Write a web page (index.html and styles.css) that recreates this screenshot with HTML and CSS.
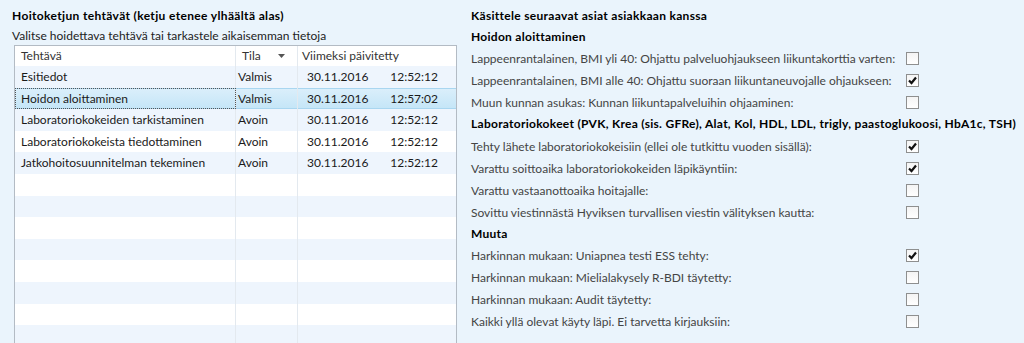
FILE: index.html
```html
<!DOCTYPE html>
<html lang="fi">
<head>
<meta charset="utf-8">
<title>Hoitoketju</title>
<link rel="stylesheet" href="styles.css">
</head>
<body>
<div class="page">
  <section class="left">
    <h2 class="title">Hoitoketjun tehtävät (ketju etenee ylhäältä alas)</h2>
    <div class="subtitle">Valitse hoidettava tehtävä tai tarkastele aikaisemman tietoja</div>
    <div class="grid">
      <div class="row head">
        <div class="c c1">Tehtävä</div>
        <div class="c c2">Tila <svg class="sort" width="7" height="4" viewBox="0 0 7 4"><path d="M0 0H7L3.5 4Z" fill="#555"/></svg></div>
        <div class="c c3">Viimeksi päivitetty</div>
      </div>
      <div class="row alt">
        <div class="c c1">Esitiedot</div>
        <div class="c c2">Valmis</div>
        <div class="c c3"><span>30.11.2016</span><span>12:52:12</span></div>
      </div>
      <div class="row sel">
        <div class="c c1">Hoidon aloittaminen</div>
        <div class="c c2">Valmis</div>
        <div class="c c3"><span>30.11.2016</span><span>12:57:02</span></div>
      </div>
      <div class="row alt">
        <div class="c c1">Laboratoriokokeiden tarkistaminen</div>
        <div class="c c2">Avoin</div>
        <div class="c c3"><span>30.11.2016</span><span>12:52:12</span></div>
      </div>
      <div class="row">
        <div class="c c1">Laboratoriokokeista tiedottaminen</div>
        <div class="c c2">Avoin</div>
        <div class="c c3"><span>30.11.2016</span><span>12:52:12</span></div>
      </div>
      <div class="row alt">
        <div class="c c1">Jatkohoitosuunnitelman tekeminen</div>
        <div class="c c2">Avoin</div>
        <div class="c c3"><span>30.11.2016</span><span>12:52:12</span></div>
      </div>
      <div class="row"><div class="c c1"></div><div class="c c2"></div><div class="c c3"></div></div>
      <div class="row alt"><div class="c c1"></div><div class="c c2"></div><div class="c c3"></div></div>
      <div class="row"><div class="c c1"></div><div class="c c2"></div><div class="c c3"></div></div>
      <div class="row alt"><div class="c c1"></div><div class="c c2"></div><div class="c c3"></div></div>
      <div class="row"><div class="c c1"></div><div class="c c2"></div><div class="c c3"></div></div>
      <div class="row alt"><div class="c c1"></div><div class="c c2"></div><div class="c c3"></div></div>
      <div class="row"><div class="c c1"></div><div class="c c2"></div><div class="c c3"></div></div>
      <div class="row alt"><div class="c c1"></div><div class="c c2"></div><div class="c c3"></div></div>
    </div>
  </section>

  <section class="right">
    <h2 class="r-title">Käsittele seuraavat asiat asiakkaan kanssa</h2>
    <h3 class="h h-first">Hoidon aloittaminen</h3>
    <div class="item"><span>Lappeenrantalainen, BMI yli 40: Ohjattu palveluohjaukseen liikuntakorttia varten:</span><span class="cb"></span></div>
    <div class="item"><span>Lappeenrantalainen, BMI alle 40: Ohjattu suoraan liikuntaneuvojalle ohjaukseen:</span><span class="cb"><svg width="11" height="11" viewBox="0 0 11 11"><path d="M2 5.5L4.5 8L9 2.5" fill="none" stroke="#111" stroke-width="2.2"/></svg></span></div>
    <div class="item"><span>Muun kunnan asukas: Kunnan liikuntapalveluihin ohjaaminen:</span><span class="cb"></span></div>
    <h3 class="h">Laboratoriokokeet (PVK, Krea (sis. GFRe), Alat, Kol, HDL, LDL, trigly, paastoglukoosi, HbA1c, TSH)</h3>
    <div class="item"><span>Tehty lähete laboratoriokokeisiin (ellei ole tutkittu vuoden sisällä):</span><span class="cb"><svg width="11" height="11" viewBox="0 0 11 11"><path d="M2 5.5L4.5 8L9 2.5" fill="none" stroke="#111" stroke-width="2.2"/></svg></span></div>
    <div class="item"><span>Varattu soittoaika laboratoriokokeiden läpikäyntiin:</span><span class="cb"><svg width="11" height="11" viewBox="0 0 11 11"><path d="M2 5.5L4.5 8L9 2.5" fill="none" stroke="#111" stroke-width="2.2"/></svg></span></div>
    <div class="item"><span>Varattu vastaanottoaika hoitajalle:</span><span class="cb"></span></div>
    <div class="item"><span>Sovittu viestinnästä Hyviksen turvallisen viestin välityksen kautta:</span><span class="cb"></span></div>
    <h3 class="h h-last">Muuta</h3>
    <div class="item"><span>Harkinnan mukaan: Uniapnea testi ESS tehty:</span><span class="cb"><svg width="11" height="11" viewBox="0 0 11 11"><path d="M2 5.5L4.5 8L9 2.5" fill="none" stroke="#111" stroke-width="2.2"/></svg></span></div>
    <div class="item"><span>Harkinnan mukaan: Mielialakysely R-BDI täytetty:</span><span class="cb"></span></div>
    <div class="item"><span>Harkinnan mukaan: Audit täytetty:</span><span class="cb"></span></div>
    <div class="item"><span>Kaikki yllä olevat käyty läpi. Ei tarvetta kirjauksiin:</span><span class="cb"></span></div>
  </section>
</div>
</body>
</html>
```

FILE: styles.css
```css
html, body {
  margin: 0;
  padding: 0;
}

body {
  background: #eaf4fc;
  font-family: "Lato", "Open Sans", sans-serif;
  font-size: 12px;
  color: #222;
}

.page {
  display: flex;
  height: 343px;
  overflow: hidden;
  background: #eaf4fc;
}

/* ---------- left panel ---------- */
.left {
  width: 471px;
  flex: none;
  box-sizing: border-box;
  padding: 5px 14px 0 12px;
  display: flex;
  flex-direction: column;
}

.title {
  margin: 0;
  font-size: 12px;
  font-weight: bold;
  color: #000;
  height: 21px;
  line-height: 21px;
  letter-spacing: 0.35px;
}

.subtitle {
  height: 19px;
  line-height: 18px;
  padding-top: 1px;
  box-sizing: border-box;
  color: #222;
}

.grid {
  flex: 1;
  margin-left: 2px;
  border: 1px solid #b3bbc4;
  border-bottom: none;
  background: #fff;
  overflow: hidden;
}

.row {
  display: grid;
  grid-template-columns: 221px 62px 1fr;
  height: 21.6px;
  line-height: 21px;
  background: #fff;
  color: #1a1a1a;
}

.row.alt {
  background: #eef5fd;
}

.row.head {
  height: 20px;
  line-height: 20px;
  background: #fff;
  color: #333;
}

.c {
  box-sizing: border-box;
  white-space: nowrap;
  overflow: hidden;
}

.c1 {
  padding-left: 6px;
  border-right: 1px solid #e3e9ef;
}

.c2 {
  padding-left: 2px;
  border-right: 1px solid #e3e9ef;
}

.c3 {
  padding-left: 9px;
  padding-right: 18px;
  display: flex;
  justify-content: space-between;
}

.head .c2 {
  padding-left: 6px;
}

.head .c3 {
  padding-left: 4px;
}

.sort {
  margin-left: 14px;
  vertical-align: middle;
  position: relative;
  top: -1px;
}

.row.sel {
  background: linear-gradient(#dbeffb, #c4e5f7);
  box-shadow: inset 0 1px 0 #a9d6f0, inset 0 -1px 0 #a9d6f0;
}

.row.sel .c1 {
  outline: 1px dotted #555;
  outline-offset: -1px;
}

/* ---------- right panel ---------- */
.right {
  flex: 1;
  padding-top: 5px;
  color: #444;
}

.r-title {
  margin: 0;
  font-size: 12px;
  font-weight: bold;
  color: #000;
  height: 21px;
  line-height: 21px;
  letter-spacing: 0.3px;
}

.h {
  margin: 0;
  font-size: 12px;
  font-weight: bold;
  color: #000;
  height: 22px;
  line-height: 22px;
  white-space: nowrap;
  letter-spacing: 0.28px;
}

.h-first,
.h-last {
  height: 21px;
  line-height: 21px;
}

.item {
  display: grid;
  grid-template-columns: 435px 13px;
  align-items: center;
  height: 22px;
  white-space: nowrap;
}

.cb {
  width: 13px;
  height: 13px;
  box-sizing: border-box;
  border: 1px solid #8e8f8f;
  background: linear-gradient(#f4f4f4, #fff);
  display: flex;
  align-items: center;
  justify-content: center;
}
```
